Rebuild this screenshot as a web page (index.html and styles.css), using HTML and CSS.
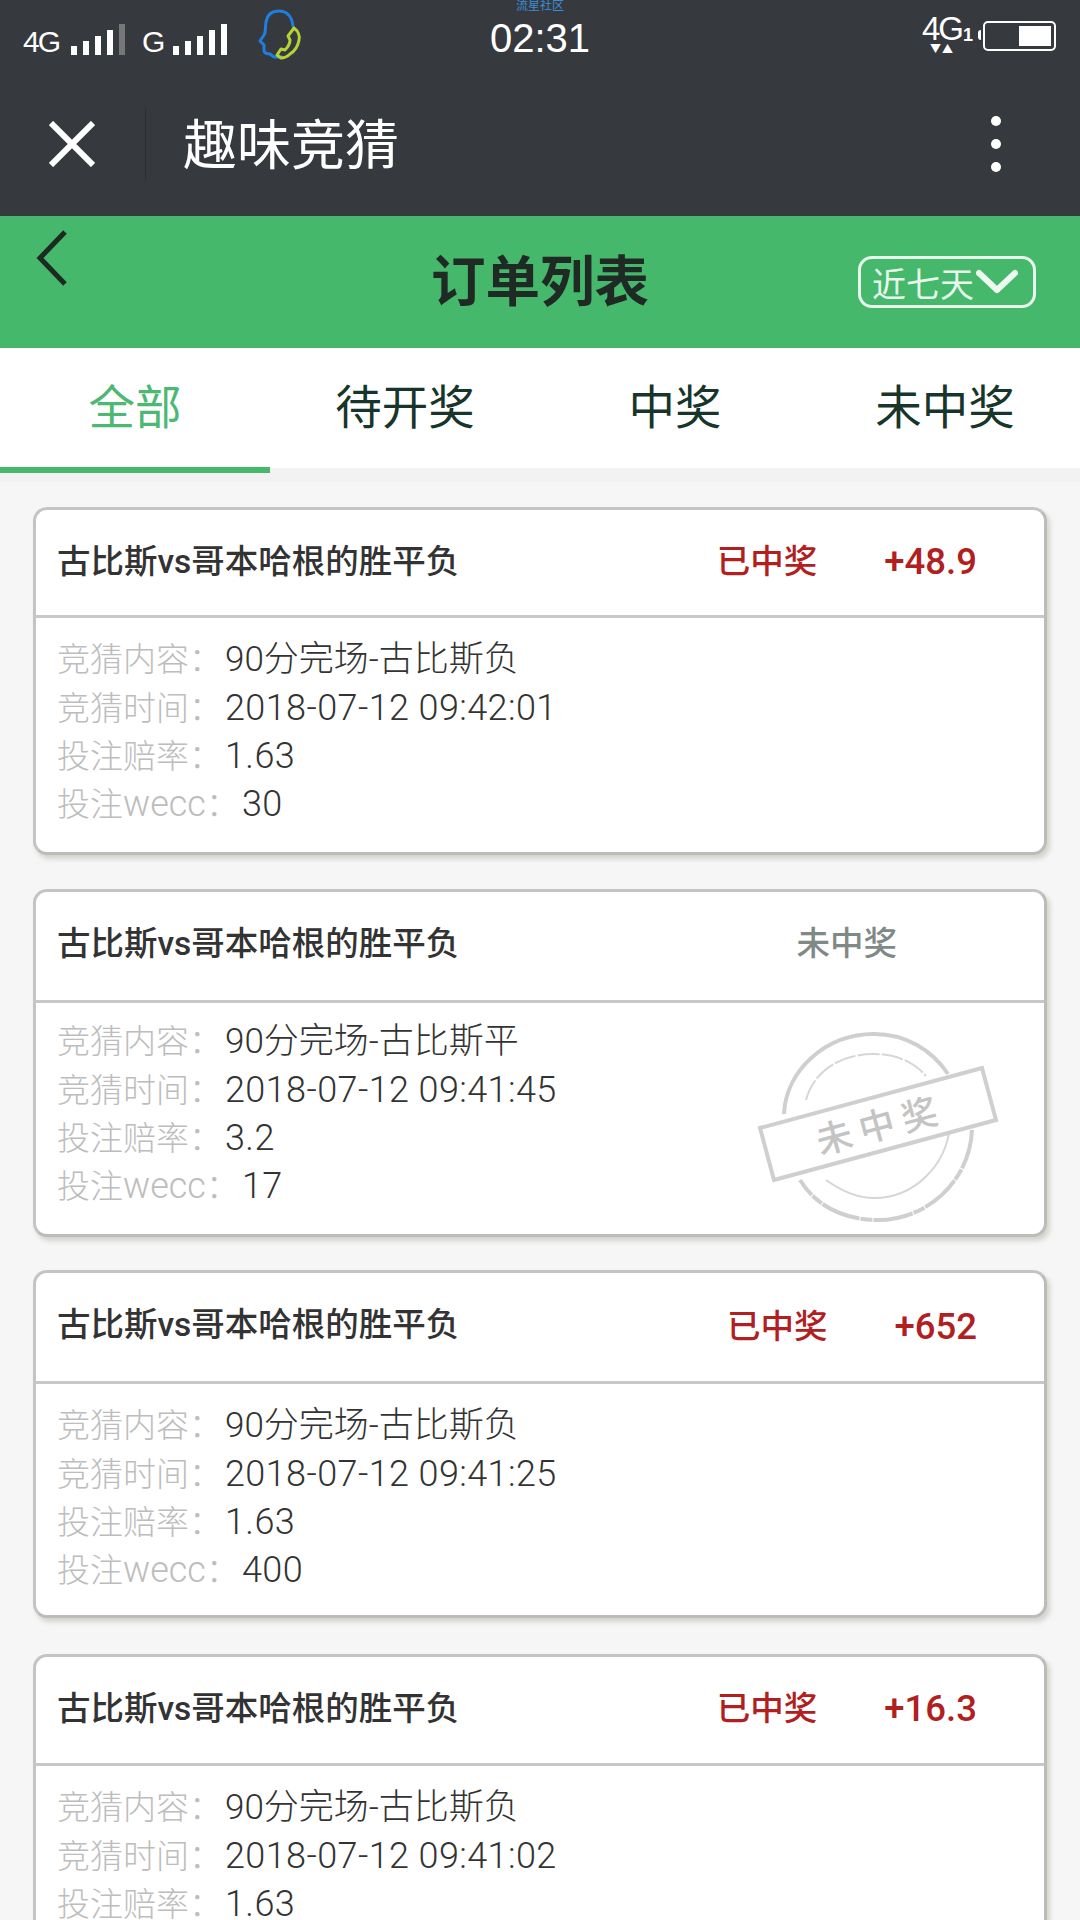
FILE: index.html
```html
<!DOCTYPE html>
<html>
<head>
	<meta charset="utf-8">
	<title>订单列表</title>
	<link rel="stylesheet" href="styles.css">
</head>
<body>
	<div class="topbar">
		<div class="status_bar">
			<div class="status_left">
				<span class="net net_first">4G</span>
				<span class="signal"><i class="s1"></i><i class="s2"></i><i class="s3"></i><i class="s4"></i><i class="s5 dim"></i></span>
				<span class="net net_second">G</span>
				<span class="signal"><i class="s1"></i><i class="s2"></i><i class="s3"></i><i class="s4"></i><i class="s5"></i></span>
				<svg class="call_icon" width="46" height="54" viewBox="0 0 46 54" fill="none">
					<path d="M36 18 C35 9 30 3 22 3 C14 3 10 8 9 14 C8 20 9 24 7 27 L3 33 L7 37 L7 43 C8 46 11 46 13 46 L17 49 L25 49" stroke="#1f7fe0" stroke-width="3" stroke-linecap="round" stroke-linejoin="round"/>
					<path d="M37 20 C41 23 43 28 42 32 C41 38 38 43 33 46 C30 49 27 50 24 50 L20 47 L24 41 L28 42 C31 39 33 36 33 32 L31 28 Z" stroke="#b5d334" stroke-width="3" stroke-linejoin="round"/>
				</svg>
			</div>
			<div class="status_center">
				<span class="status_brand">流星社区</span>
				<span class="clock">02:31</span>
			</div>
			<div class="status_right">
				<span class="net_group">
					<span class="net_big">4G</span>
					<span class="net_arrows">▼▲</span>
				</span>
				<span class="sim">1</span>
				<span class="battery_tip"></span>
				<span class="battery"><i></i></span>
			</div>
		</div>
		<div class="nav">
			<svg class="close_icon" width="46" height="46" viewBox="0 0 46 46">
				<path d="M2 2 L44 44 M44 2 L2 44" stroke="#fff" stroke-width="6"/>
			</svg>
			<span class="nav_sep"></span>
			<span class="nav_title">趣味竞猜</span>
			<span class="nav_more"><i></i><i></i><i></i></span>
		</div>
	</div>

	<div class="header">
		<svg class="back_icon" width="34" height="58" viewBox="0 0 34 58" fill="none">
			<path d="M30 3 L5 29 L30 55" stroke="#1c2b22" stroke-width="5"/>
		</svg>
		<h1>订单列表</h1>
		<div class="range">
			<span>近七天</span>
			<svg width="42" height="26" viewBox="0 0 42 26" fill="none">
				<path d="M3 4 L21 21 L39 4" stroke="#eefaf0" stroke-width="6" stroke-linecap="round" stroke-linejoin="round"/>
			</svg>
		</div>
	</div>

	<div class="tabs">
		<div class="tab active">全部</div>
		<div class="tab">待开奖</div>
		<div class="tab">中奖</div>
		<div class="tab">未中奖</div>
	</div>

	<div class="orders">
		<div class="order order_first">
			<div class="order_head">
				<span class="order_title">古比斯vs哥本哈根的胜平负</span>
				<span class="state">已中奖</span>
				<span class="amount">+48.9</span>
			</div>
			<div class="order_body">
				<div class="line"><span class="key">竞猜内容：</span>90分完场-古比斯负</div>
				<div class="line"><span class="key">竞猜时间：</span><span class="num">2018-07-12 09:42:01</span></div>
				<div class="line"><span class="key">投注赔率：</span><span class="num">1.63</span></div>
				<div class="line"><span class="key">投注<span class="key_latin">wecc</span>：</span><span class="num">30</span></div>
			</div>
		</div>

		<div class="order">
			<div class="order_head head_tall">
				<span class="order_title">古比斯vs哥本哈根的胜平负</span>
				<span class="state lost">未中奖</span>
			</div>
			<div class="order_body body_tight">
				<div class="line"><span class="key">竞猜内容：</span>90分完场-古比斯平</div>
				<div class="line"><span class="key">竞猜时间：</span><span class="num">2018-07-12 09:41:45</span></div>
				<div class="line"><span class="key">投注赔率：</span><span class="num">3.2</span></div>
				<div class="line"><span class="key">投注<span class="key_latin">wecc</span>：</span><span class="num">17</span></div>
				<svg class="stamp" width="244" height="196" viewBox="0 0 244 196" fill="none">
					<path d="M28 84 C30 40 70 4 118 4 C150 4 176 20 192 44" stroke="#cfcfcf" stroke-width="4"/>
					<path d="M216 100 C214 150 172 190 122 190 C88 190 60 176 44 150" stroke="#cfcfcf" stroke-width="4" stroke-dasharray="40 1 12 1"/>
					<path d="M50 70 C58 40 86 24 118 24 C140 24 158 32 170 46" stroke="#d6d6d6" stroke-width="2" stroke-dasharray="22 2"/>
					<path d="M194 96 C190 136 158 168 118 168 C100 168 84 160 70 150" stroke="#d6d6d6" stroke-width="2"/>
					<path d="M4 98 L226 38 L240 90 L18 150 Z" fill="#fff" stroke="#cfcfcf" stroke-width="4"/>
					<text class="stamp_text" x="125" y="108" text-anchor="middle" transform="rotate(-15 125 96)">未中奖</text>
				</svg>
			</div>
		</div>

		<div class="order order_third">
			<div class="order_head head_tall">
				<span class="order_title">古比斯vs哥本哈根的胜平负</span>
				<span class="state state_low">已中奖</span>
				<span class="amount state_low">+652</span>
			</div>
			<div class="order_body">
				<div class="line"><span class="key">竞猜内容：</span>90分完场-古比斯负</div>
				<div class="line"><span class="key">竞猜时间：</span><span class="num">2018-07-12 09:41:25</span></div>
				<div class="line"><span class="key">投注赔率：</span><span class="num">1.63</span></div>
				<div class="line"><span class="key">投注<span class="key_latin">wecc</span>：</span><span class="num">400</span></div>
			</div>
		</div>

		<div class="order">
			<div class="order_head head_last">
				<span class="order_title">古比斯vs哥本哈根的胜平负</span>
				<span class="state">已中奖</span>
				<span class="amount">+16.3</span>
			</div>
			<div class="order_body">
				<div class="line"><span class="key">竞猜内容：</span>90分完场-古比斯负</div>
				<div class="line"><span class="key">竞猜时间：</span><span class="num">2018-07-12 09:41:02</span></div>
				<div class="line"><span class="key">投注赔率：</span><span class="num">1.63</span></div>
			</div>
		</div>
	</div>
</body>
</html>
```

FILE: styles.css
```css
html, body { margin: 0; padding: 0; }
body { width: 1080px; height: 1920px; overflow: hidden; background: #f6f6f6; font-family: Roboto, "Noto Sans CJK SC", sans-serif; color: #333; }
i { display: block; }

/* Top bar */
.topbar { height: 216px; background: #36393d; color: #fff; }
.status_bar { position: relative; height: 72px; display: flex; justify-content: space-between; }
.status_left { display: flex; align-items: flex-end; padding: 0 0 15px 23px; }
.net { font-family: "Liberation Sans", sans-serif; font-size: 30px; line-height: 30px; }
.net_first { letter-spacing: -2px; width: 48px; }
.net_second { margin: 0 8px 0 17px; }
.signal { display: flex; align-items: flex-end; gap: 6px; height: 32px; padding-bottom: 2px; }
.signal i { width: 6px; background: #fff; }
.signal .s1 { height: 9px; }
.signal .s2 { height: 14px; }
.signal .s3 { height: 19px; }
.signal .s4 { height: 25px; }
.signal .s5 { height: 31px; }
.signal .dim { background: #777; }
.call_icon { margin: 0 0 -5px 30px; }
.status_center { position: absolute; left: 0; right: 0; top: 0; text-align: center; }
.status_brand { display: block; height: 13px; font-size: 12px; line-height: 13px; color: #3b8fd8; }
.clock { display: block; margin-top: 3px; font-family: "Liberation Sans", sans-serif; font-size: 40px; line-height: 44px; }
.status_right { display: flex; align-items: flex-start; padding: 14px 24px 0 0; }
.net_group { display: block; width: 40px; text-align: center; }
.net_big { display: block; font-family: "Liberation Sans", sans-serif; font-size: 33px; line-height: 30px; letter-spacing: -2px; }
.net_arrows { display: block; font-size: 11px; line-height: 12px; letter-spacing: 1px; }
.sim { font-family: "Liberation Sans", sans-serif; font-weight: bold; font-size: 18px; line-height: 42px; margin-left: 1px; }
.battery_tip { width: 3px; height: 10px; margin: 16px 2px 0 5px; background: #fff; border-radius: 3px 0 0 3px; }
.battery { display: flex; justify-content: flex-end; width: 63px; height: 20px; padding: 3px; border: 2px solid #fff; border-radius: 5px; margin-top: 7px; }
.battery i { width: 32px; height: 100%; background: #fff; }
.nav { display: flex; align-items: center; height: 144px; }
.close_icon { margin-left: 49px; }
.nav_sep { width: 1px; height: 72px; margin-left: 50px; background: #2c2f32; }
.nav_title { margin: -5px 0 0 37px; font-size: 54px; }
.nav_more { display: flex; flex-direction: column; gap: 13px; margin-left: auto; margin-right: 79px; }
.nav_more i { width: 10px; height: 10px; background: #fff; border-radius: 50%; }

/* Green header */
.header { position: relative; display: flex; align-items: center; justify-content: center; height: 132px; background: #45b86b; }
.header h1 { margin: -10px 0 0; font-size: 54.5px; font-weight: bold; color: #1f2a24; }
.back_icon { position: absolute; left: 35px; top: 13px; }
.range { position: absolute; right: 44px; top: 40px; display: flex; align-items: center; gap: 2px; height: 46px; padding: 0 15px 0 11px; border: 3px solid #e8f7ec; border-radius: 14px; color: #e8f7ec; font-size: 34px; }

/* Tabs */
.tabs { display: flex; height: 120px; background: #fff; }
.tab { flex: 1; height: 125px; box-sizing: border-box; text-align: center; font-size: 46.5px; line-height: 121px; color: #17352a; }
.tab.active { color: #4cb872; border-bottom: 6px solid #45b86b; }

/* Orders */
.orders { padding: 25px 33px 0; border-top: 14px solid #f2f2f2; }
.order { height: 348px; box-sizing: border-box; margin-bottom: 33px; display: flex; flex-direction: column; background: #fff; border: 3px solid #c4c4c4; border-right-color: #bcbdb8; border-bottom-color: #bcbdb8; border-radius: 14px; box-shadow: 3px 4px 5px #d2d3ce; }
.order_first { margin-bottom: 34px; }
.order_third { margin-bottom: 36px; }
.order_head { display: flex; align-items: flex-start; height: 105px; box-sizing: content-box; padding: 0 67px 0 21px; border-bottom: 3px solid #c8c8c8; font-size: 33.5px; line-height: 50px; }
.order_head > span { margin-top: 27px; }
.order_head.head_tall { height: 108px; }
.order_head.head_last { height: 106px; }
.order_title { flex: 1; font-weight: 500; color: #333; }
.state { font-weight: 500; color: #b1201f; }
.state.lost { margin-right: 80px; color: #7f8a86; }
.amount { margin-left: 67px; font-size: 36.5px; font-weight: 500; color: #b1201f; }
.order_head > .state_low { margin-top: 29px; }
.order_body { position: relative; flex: 1; padding: 18px 21px 0; }
.order_body.body_tight { padding-top: 15px; }
.line { height: 48.1px; font-size: 35px; line-height: 48px; font-weight: 300; color: #333; white-space: nowrap; }
.key { margin-right: 3px; font-size: 33px; color: #bdbdbd; }
.key_latin { font-size: 36px; }
.num { font-size: 36px; letter-spacing: 0.4px; }
.stamp { position: absolute; right: 44px; top: 27px; }
.stamp_text { font-size: 36px; font-weight: 500; letter-spacing: 8px; fill: #c4c4c4; }
```
